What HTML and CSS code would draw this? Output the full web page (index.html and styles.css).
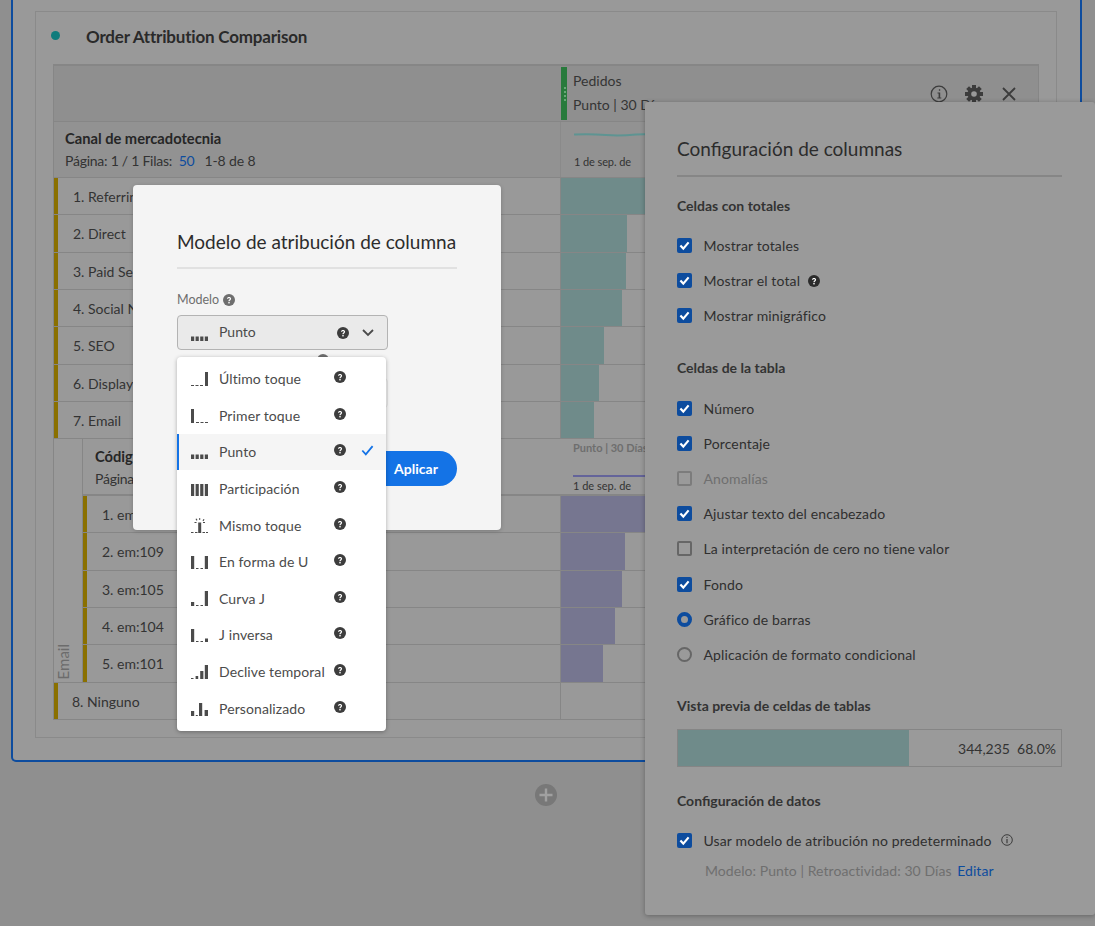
FILE: index.html
```html
<!DOCTYPE html>
<html lang="es">
<head>
<meta charset="utf-8">
<title>Order Attribution Comparison</title>
<link rel="stylesheet" href="styles.css">
</head>
<body>
<svg class="sprite" width="0" height="0" aria-hidden="true">
  <symbol id="m-last" viewBox="0 0 17 15"><path d="M0 14h3v1H0zM4.5 14h3v1h-3zM9 14h3v1H9zM14 1h3v14h-3z"/></symbol>
  <symbol id="m-first" viewBox="0 0 17 15"><path d="M0 1h3v14H0zM5 14h3v1H5zM9.5 14h3v1h-3zM14 14h3v1h-3z"/></symbol>
  <symbol id="m-point" viewBox="0 0 17 15"><path d="M0 10.5h3.2V15H0zM4.6 10.5h3.2V15H4.6zM9.2 10.5h3.2V15H9.2zM13.8 10.5H17V15h-3.2z"/></symbol>
  <symbol id="m-share" viewBox="0 0 17 15"><path d="M0 3h3.2v12H0zM4.6 3h3.2v12H4.6zM9.2 3h3.2v12H9.2zM13.8 3H17v12h-3.2z"/></symbol>
  <symbol id="m-same" viewBox="0 0 17 15"><path d="M0 14h2.5v1H0zM4 14h2.5v1H4zM7.2 4.5h3V15h-3zM11.5 14H14v1h-2.5zM15 14h2v1h-2zM8.2 0h1v2h-1zM4.5 1l1-.6 1 1.7-1 .6zM12.5.9l1 .6-1 1.7-1-.6zM3.5 4h2v1h-2zM12 4h2v1h-2z"/></symbol>
  <symbol id="m-u" viewBox="0 0 17 15"><path d="M0 2h3.2v13H0zM5 14h2.5v1H5zM9.5 14H12v1H9.5zM13.8 2H17v13h-3.2z"/></symbol>
  <symbol id="m-j" viewBox="0 0 17 15"><path d="M0 11h3.2v4H0zM5 14h2.5v1H5zM9.5 14H12v1H9.5zM13.8 0H17v15h-3.2z"/></symbol>
  <symbol id="m-rj" viewBox="0 0 17 15"><path d="M0 2h3.2v13H0zM5 14h2.5v1H5zM9.5 14H12v1H9.5zM14 11.5h3V15h-3z"/></symbol>
  <symbol id="m-decay" viewBox="0 0 17 15"><path d="M0 14h2.5v1H0zM4.6 12h2.6v3H4.6zM9.2 7h3.2v8H9.2zM13.8 1H17v14h-3.2z"/></symbol>
  <symbol id="m-custom" viewBox="0 0 17 15"><path d="M0 10h3.2v5H0zM4.8 14h2v1h-2zM8 2h3.2v13H8zM13.6 9H17v6h-3.4z"/></symbol>
  <symbol id="help" viewBox="0 0 12 12"><circle cx="6" cy="6" r="6" fill="currentColor"/><path d="M4 4.7C4 3.6 4.9 3 6 3s2.1.6 2.1 1.7c0 1.5-1.5 1.4-1.5 2.6H5.4c0-1.8 1.4-1.7 1.4-2.6 0-.4-.3-.7-.8-.7s-.8.3-.8.8z" fill="#fff"/><rect x="5.3" y="8" width="1.4" height="1.4" fill="#fff"/></symbol>
  <symbol id="tick" viewBox="0 0 15 15"><path d="M3.4 7.6l2.9 3 5.3-6.2" fill="none" stroke="#fff" stroke-width="2.2"/></symbol>
</svg>

<main class="workspace">
  <section class="panel">
    <div class="card">
      <header class="card-head"><span class="dot"></span><h2>Order Attribution Comparison</h2></header>
      <div class="table">
        <div class="row head-top">
          <div class="cell-l"></div>
          <div class="cell-r metric">
            <span class="grip"><i></i><i></i><i></i><i></i></span>
            <div class="metric-text"><div>Pedidos</div><div class="metric-sub">Punto | 30 Días</div></div>
            <div class="metric-tools">
              <svg width="18" height="18" viewBox="0 0 18 18"><circle cx="9" cy="9" r="7.8" fill="none" stroke="#3c3c3c" stroke-width="1.2"/><path d="M8.9 4.3h1.3v1.5H8.900zM7.5 7.500h2.700v5h1.100v1H7.300v-1h1.300V8.500H7.500z" fill="#3c3c3c"/></svg>
              <svg width="18" height="18" viewBox="0 0 18 18"><g fill="#3c3c3c"><circle cx="9" cy="9" r="6.500"/><rect x="7" y="0" width="4" height="18"/><rect x="7" y="0" width="4" height="18" transform="rotate(45 9 9)"/><rect x="7" y="0" width="4" height="18" transform="rotate(90 9 9)"/><rect x="7" y="0" width="4" height="18" transform="rotate(135 9 9)"/></g><circle cx="9" cy="9" r="2.800" fill="#999"/></svg>
              <svg width="18" height="18" viewBox="0 0 18 18"><path d="M3 3l12 12M15 3L3 15" stroke="#3c3c3c" stroke-width="1.800" fill="none"/></svg>
            </div>
          </div>
        </div>
        <div class="row head-dim">
          <div class="cell-l dim-title">
            <strong>Canal de mercadotecnia</strong>
            <div class="pager">Página: 1 / 1 Filas: &nbsp;<span class="link">50</span><span class="pager-range">1-8 de 8</span></div>
          </div>
          <div class="cell-r spark">
            <svg class="spark-line" width="100" height="6" viewBox="0 0 100 6"><path d="M0 2.500C10 2 20 2 32 3s20 .5 30-.5 25 .5 38 .5" fill="none" stroke="#5e9492" stroke-width="2"/></svg>
            <span class="spark-date">1 de sep. de</span>
          </div>
        </div>

        <div class="row item h37"><div class="cell-l mark"><span>1. Referrin</span></div><div class="cell-r"><span class="bar teal" style="width:100%"></span></div></div>
        <div class="row item h38"><div class="cell-l mark"><span>2. Direct</span></div><div class="cell-r"><span class="bar teal" style="width:66px"></span></div></div>
        <div class="row item h37"><div class="cell-l mark"><span>3. Paid Se</span></div><div class="cell-r"><span class="bar teal" style="width:65px"></span></div></div>
        <div class="row item h37"><div class="cell-l mark"><span>4. Social N</span></div><div class="cell-r"><span class="bar teal" style="width:61px"></span></div></div>
        <div class="row item h38"><div class="cell-l mark"><span>5. SEO</span></div><div class="cell-r"><span class="bar teal" style="width:43px"></span></div></div>
        <div class="row item h37"><div class="cell-l mark"><span>6. Display</span></div><div class="cell-r"><span class="bar teal" style="width:38px"></span></div></div>
        <div class="row item h37"><div class="cell-l mark"><span>7. Email</span></div><div class="cell-r"><span class="bar teal" style="width:33px"></span></div></div>

        <div class="breakdown">
          <div class="side-label"><span>Email</span></div>
          <div class="sub-table">
            <div class="row sub-head">
              <div class="cell-l dim-title sub-title">
                <strong>Códig</strong>
                <div class="pager">Página</div>
              </div>
              <div class="cell-r spark sub-spark">
                <span class="sub-metric">Punto | 30 Días</span>
                <span class="sub-line"></span>
                <span class="sub-date">1 de sep. de</span>
              </div>
            </div>
            <div class="row item h37"><div class="cell-l mark sub-mark"><span>1. em</span></div><div class="cell-r"><span class="bar purple" style="width:100%"></span></div></div>
            <div class="row item h38"><div class="cell-l mark sub-mark"><span>2. em:109</span></div><div class="cell-r"><span class="bar purple" style="width:64px"></span></div></div>
            <div class="row item h37"><div class="cell-l mark sub-mark"><span>3. em:105</span></div><div class="cell-r"><span class="bar purple" style="width:61px"></span></div></div>
            <div class="row item h37"><div class="cell-l mark sub-mark"><span>4. em:104</span></div><div class="cell-r"><span class="bar purple" style="width:54px"></span></div></div>
            <div class="row item h38 last-sub"><div class="cell-l mark sub-mark"><span>5. em:101</span></div><div class="cell-r"><span class="bar purple" style="width:42px"></span></div></div>
          </div>
        </div>
        <div class="row item h37 last"><div class="cell-l mark"><span>8. Ninguno</span></div><div class="cell-r"></div></div>
      </div>
    </div>
  </section>
  <div class="add-wrap">
    <svg width="22" height="22" viewBox="0 0 22 22"><circle cx="11" cy="11" r="11" fill="#787878"/><path d="M11 4.500v13M4.500 11h13" stroke="#a0a0a0" stroke-width="2.400"/></svg>
  </div>
</main>

<aside class="settings">
  <h3 class="settings-title">Configuración de columnas</h3>
  <h4 class="sec sec-first">Celdas con totales</h4>
  <div class="opts">
    <label class="opt"><svg class="box on"><use href="#tick"/></svg>Mostrar totales</label>
    <label class="opt"><svg class="box on"><use href="#tick"/></svg>Mostrar el total <svg class="q dark-q"><use href="#help"/></svg></label>
    <label class="opt"><svg class="box on"><use href="#tick"/></svg>Mostrar minigráfico</label>
  </div>
  <h4 class="sec sec-second">Celdas de la tabla</h4>
  <div class="opts">
    <label class="opt"><svg class="box on"><use href="#tick"/></svg>Número</label>
    <label class="opt"><svg class="box on"><use href="#tick"/></svg>Porcentaje</label>
    <label class="opt disabled"><span class="box off faded"></span>Anomalías</label>
    <label class="opt"><svg class="box on"><use href="#tick"/></svg>Ajustar texto del encabezado</label>
    <label class="opt"><span class="box off"></span>La interpretación de cero no tiene valor</label>
    <label class="opt"><svg class="box on"><use href="#tick"/></svg>Fondo</label>
    <label class="opt"><span class="radio on"></span>Gráfico de barras</label>
    <label class="opt"><span class="radio"></span>Aplicación de formato condicional</label>
  </div>
  <h4 class="sec sec-third">Vista previa de celdas de tablas</h4>
  <div class="preview"><span class="preview-bar"></span><span class="preview-val">344,235&nbsp; 68.0%</span></div>
  <h4 class="sec sec-fourth">Configuración de datos</h4>
  <label class="opt data-opt"><svg class="box on"><use href="#tick"/></svg>Usar modelo de atribución no predeterminado
    <svg class="info-sm" width="12" height="12" viewBox="0 0 12 12"><circle cx="6" cy="6" r="5.300" fill="none" stroke="#3c3c3c"/><path d="M5.400 2.800h1.200V4H5.400zM5.400 5h1.200v4.200H5.400z" fill="#3c3c3c"/></svg>
  </label>
  <div class="model-line"><span class="model-dim">Modelo: Punto | Retroactividad: 30 Días</span> <span class="link">Editar</span></div>
</aside>

<div class="modal">
  <h3 class="modal-title">Modelo de atribución de columna</h3>
  <div class="field-label">Modelo <svg class="q grey-q"><use href="#help"/></svg></div>
  <div class="select">
    <svg class="model-ico"><use href="#m-point"/></svg>
    <span class="select-text">Punto</span>
    <svg class="q dark-q"><use href="#help"/></svg>
    <svg class="chev" width="12" height="8" viewBox="0 0 12 8"><path d="M1 1l5 5 5-5" fill="none" stroke="#4b4b4b" stroke-width="1.800"/></svg>
  </div>
  <div class="peek-label"><svg class="q grey-q"><use href="#help"/></svg></div>
  <div class="select peek-select"></div>
  <div class="modal-foot"><button class="apply" type="button">Aplicar</button></div>

  <ul class="menu">
    <li class="menu-item"><svg class="model-ico"><use href="#m-last"/></svg><span class="menu-text">Último toque</span><svg class="q dark-q"><use href="#help"/></svg></li>
    <li class="menu-item"><svg class="model-ico"><use href="#m-first"/></svg><span class="menu-text">Primer toque</span><svg class="q dark-q"><use href="#help"/></svg></li>
    <li class="menu-item selected"><svg class="model-ico"><use href="#m-point"/></svg><span class="menu-text">Punto</span><svg class="q dark-q"><use href="#help"/></svg><svg class="check" width="13" height="11" viewBox="0 0 13 11"><path d="M1.300 5.500l3.500 3.800 6.800-8.200" fill="none" stroke="#1473e6" stroke-width="1.800"/></svg></li>
    <li class="menu-item"><svg class="model-ico"><use href="#m-share"/></svg><span class="menu-text">Participación</span><svg class="q dark-q"><use href="#help"/></svg></li>
    <li class="menu-item"><svg class="model-ico"><use href="#m-same"/></svg><span class="menu-text">Mismo toque</span><svg class="q dark-q"><use href="#help"/></svg></li>
    <li class="menu-item"><svg class="model-ico"><use href="#m-u"/></svg><span class="menu-text">En forma de U</span><svg class="q dark-q"><use href="#help"/></svg></li>
    <li class="menu-item"><svg class="model-ico"><use href="#m-j"/></svg><span class="menu-text">Curva J</span><svg class="q dark-q"><use href="#help"/></svg></li>
    <li class="menu-item"><svg class="model-ico"><use href="#m-rj"/></svg><span class="menu-text">J inversa</span><svg class="q dark-q"><use href="#help"/></svg></li>
    <li class="menu-item"><svg class="model-ico"><use href="#m-decay"/></svg><span class="menu-text">Declive temporal</span><svg class="q dark-q"><use href="#help"/></svg></li>
    <li class="menu-item"><svg class="model-ico"><use href="#m-custom"/></svg><span class="menu-text">Personalizado</span><svg class="q dark-q"><use href="#help"/></svg></li>
  </ul>
</div>
</body>
</html>
```

FILE: styles.css
```css
* { box-sizing: border-box; }
html, body { margin: 0; height: 926px; overflow: hidden; }
body {
  position: relative;
  background: #8f8f8f;
  font-family: Lato, "Open Sans", sans-serif;
  font-size: 14px;
  color: #2a2a2a;
}
.sprite { position: absolute; }
h2, h3, h4, ul { margin: 0; padding: 0; }

.workspace { display: flex; flex-direction: column; }
.panel {
  width: 1071px;
  height: 762px;
  margin-left: 11px;
  padding: 11px 23px 0 22px;
  background: #999;
  border: 2px solid #0d4c9e;
  border-top: 0;
  border-radius: 0 0 5px 5px;
}
.card {
  width: 1022px;
  height: 727px;
  padding: 0 17px;
  border: 1px solid #8a8a8a;
}
.card-head { display: flex; align-items: center; height: 52px; padding-bottom: 3px; }
.dot { width: 9px; height: 9px; border-radius: 50%; background: #0f7c7c; margin: -2px 0 0 -2px; }
.card-head h2 { font-size: 17px; font-weight: 700; color: #2a2a2a; margin-left: 26px; letter-spacing: -.2px; }

.table { width: 986px; border: 1px solid #868686; border-bottom: 0; border-top-width: 2px; }
.row { display: flex; border-bottom: 1px solid #868686; }
.cell-l { flex: 0 0 506px; min-width: 0; overflow: hidden; }
.cell-r { flex: 1; position: relative; overflow: hidden; border-left: 1px solid #868686; display: flex; }
.head-top { height: 56px; background: #8f8f8f; }
.head-top .cell-r { border-left: 0; }
.metric { padding: 1px 0 1px 1px; }
.grip { width: 6px; background: #287a3c; display: flex; flex-direction: column; align-items: center; justify-content: center; gap: 2px; flex: none; margin-right: 6px; }
.grip i { width: 2px; height: 2px; border-radius: 50%; background: #7fb98c; margin-left: 2px; }
.metric-text { font-size: 14px; line-height: 24px; padding-top: 2px; color: #353535; white-space: nowrap; }
.metric-tools { position: absolute; right: 20px; top: 19px; display: flex; gap: 17px; }
.head-dim { height: 56px; background: #929292; }
.dim-title { padding: 5px 0 0 11px; line-height: 22px; font-size: 14px; }
.dim-title strong { display: block; font-size: 14.7px; font-weight: 700; color: #262626; white-space: nowrap; }
.pager { white-space: nowrap; color: #333; letter-spacing: -.25px; padding-top: 1px; }
.pager-range { margin-left: 10px; letter-spacing: -.1px; }
.link { color: #0d4c9e; }
.spark { padding-left: 13px; flex-direction: column; border-left-color: #8a8a8a; }
.spark-line { margin-top: 10px; flex: none; }
.spark-date { font-size: 11px; margin-top: 17px; color: #333; white-space: nowrap; letter-spacing: -.1px; }

.item { align-items: stretch; }
.h37 { height: 37px; }
.h38 { height: 38px; }
.mark { border-left: 4px solid #8a7000; padding-left: 15px; display: flex; align-items: center; white-space: nowrap; color: #333; }
.bar { display: block; height: 100%; }
.teal { background: #6f8b8a; }
.purple { background: #767690; }

.breakdown { display: flex; border-bottom: 1px solid #868686; height: 244px; }
.side-label { width: 29px; flex: none; background: #9a9a9a; border-right: 1px solid #868686; display: flex; align-items: flex-end; padding: 0 0 3px 2px; }
.side-label span { writing-mode: vertical-rl; transform: rotate(180deg); color: #6c6c6c; font-size: 15px; line-height: 15px; }
.sub-table { flex: 1; min-width: 0; }
.sub-table .cell-l { flex-basis: 477px; }
.sub-head { height: 57px; border-bottom-width: 2px; }
.sub-title { padding-left: 12px; padding-top: 6px; }
.sub-spark { padding-left: 12px; border-left: 0; margin-left: 1px; }
.sub-metric { font-size: 11px; font-weight: 700; color: #6e6e6e; margin-top: 2px; white-space: nowrap; }
.sub-line { display: block; height: 2px; background: #64649a; margin-top: 21px; }
.sub-date { font-size: 11px; margin-top: 2px; white-space: nowrap; color: #333; }
.sub-mark { padding-left: 15px; }
.last-sub { border-bottom: 0; height: 37px; }
.last { height: 37px; }
.last .mark { padding-left: 14px; }

.add-wrap { display: flex; justify-content: center; padding: 22px 4px 0 0; }

/* settings popover */
.settings {
  position: absolute; left: 645px; top: 102px; width: 450px; height: 813px;
  padding: 34px 33px 0 32px;
  background: #9a9a9a;
  border-radius: 3px;
  box-shadow: 0 1px 5px rgba(0,0,0,.3);
}
.settings-title { font-size: 19px; font-weight: 400; line-height: 26px; color: #2c2c2c; padding-bottom: 13px; border-bottom: 2px solid #868686; }
.sec { font-size: 14px; font-weight: 700; line-height: 20px; color: #333; }
.sec-first { margin-top: 19px; margin-bottom: 12px; }
.sec-second { margin-top: 24.5px; margin-bottom: 12.5px; }
.sec-third { margin-top: 24px; margin-bottom: 13px; }
.sec-fourth { margin-top: 24px; margin-bottom: 12px; }
.opt { display: flex; align-items: center; height: 35.2px; color: #2f2f2f; white-space: nowrap; letter-spacing: .13px; }
.disabled { color: #6f6f6f; }
.box { width: 15px; height: 15px; flex: none; margin-right: 11.5px; border-radius: 2px; }
.box.on { background: #0d4c9e; }
.box.off { border: 2px solid #666; }
.box.faded { border-color: #7c7c7c; }
.radio { width: 15px; height: 15px; flex: none; margin-right: 11.5px; border-radius: 50%; border: 2px solid #666; }
.radio.on { border: 4px solid #0d4c9e; background: #9a9a9a; }
.q { width: 12px; height: 12px; flex: none; }
.dark-q { color: #3d3d3d; }
.grey-q { color: #6e6e6e; }
.opt .q { margin-left: 8px; color: #2b2b2b; }
.preview { display: flex; align-items: center; height: 38px; border: 1px solid #858585; position: relative; }
.preview-bar { width: 231px; height: 100%; background: #6f8b8a; }
.preview-val { margin-left: auto; padding-right: 5px; color: #333; }
.data-opt { height: 20px; margin-top: 19px; }
.info-sm { margin-left: 9px; }
.model-line { margin: 12px 0 0 28px; white-space: nowrap; letter-spacing: .06px; }
.model-dim { color: #6f6f6f; font-weight: 400; margin-right: 2px; }

/* modal */
.modal {
  position: absolute; left: 133px; top: 185px; width: 368px; height: 345px;
  padding: 44px 44px 0 44px;
  background: #f4f4f4;
  border-radius: 4px;
  box-shadow: 0 1px 4px rgba(0,0,0,.2);
}
.modal-title { font-size: 19px; font-weight: 400; line-height: 26px; color: #2c2c2c; padding-bottom: 12px; border-bottom: 2px solid #e1e1e1; white-space: nowrap; }
.field-label { display: flex; align-items: center; gap: 4px; margin-top: 21px; font-size: 12.5px; line-height: 20px; color: #6e6e6e; }
.select { display: flex; align-items: center; width: 211px; height: 35px; margin-top: 5px; padding: 0 13px 0 13px; background: #eaeaea; border: 1px solid #b3b3b3; border-radius: 4px; color: #4b4b4b; }
.model-ico { width: 17px; height: 15px; flex: none; fill: #4b4b4b; margin-right: 11px; }
.select .model-ico { margin-top: 2px; }
.select-text { flex: 1; padding-bottom: 2px; }
.select .chev { margin-left: 13px; }
.peek-label { display: flex; justify-content: flex-end; width: 152px; height: 12px; margin-top: 4px; }
.peek-select { height: 30px; margin-top: 12px; background: #f4f4f4; border-color: #e4e4e4; }
.modal-foot { display: flex; justify-content: flex-end; margin-top: 43px; }
.apply { width: 90px; height: 35px; border: 0; border-radius: 18px; background: #1473e6; color: #fff; font: 700 14px Lato, "Open Sans", sans-serif; padding-left: 14px; }

.menu {
  position: absolute; left: 44px; top: 172px; width: 209px; height: 374px;
  padding: 3.5px 0 0 0;
  list-style: none;
  background: #fff;
  border-radius: 4px;
  box-shadow: 0 1px 4px rgba(0,0,0,.3);
}
.menu-item { display: flex; align-items: center; height: 36.6px; padding-left: 14px; color: #4b4b4b; position: relative; letter-spacing: .1px; }
.menu-text { width: 112px; flex: none; white-space: nowrap; }
.menu-item .q { margin-left: 3px; margin-top: -3px; }
.menu-item .model-ico { margin-right: 11px; }
.selected { background: #f5f5f5; box-shadow: inset 2px 0 0 #1473e6; }
.check { margin-left: 15px; margin-top: -3px; }
```
